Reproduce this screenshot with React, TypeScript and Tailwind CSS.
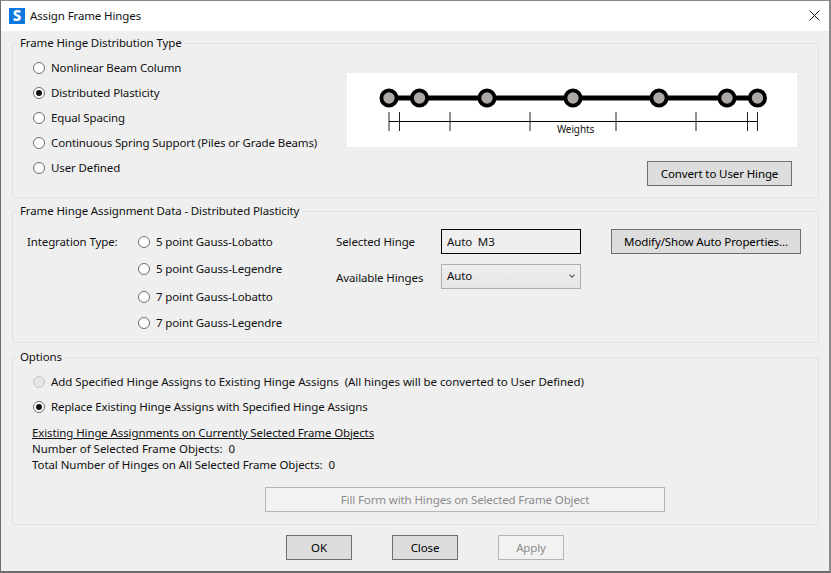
import React from "react";

function Radio({ label, checked, disabled, wide }: { label: string; checked?: boolean; disabled?: boolean; wide?: boolean }) {
  return (
    <div className="flex h-[25px] items-center gap-[6px]">
      <span
        className={`flex h-[12px] w-[12px] shrink-0 items-center justify-center rounded-full border ${
          disabled ? "border-[#c4c4c4] bg-[#e6e6e6]" : "border-[#6e6e6e] bg-white"
        }`}
      >
        {checked && <span className="h-[6px] w-[6px] rounded-full bg-[#111111]" />}
      </span>
      <span className={`whitespace-pre ${wide ? "tracking-[-0.06px]" : ""}`}>{label}</span>
    </div>
  );
}

function Btn({ children, className, disabled }: { children: React.ReactNode; className: string; disabled?: boolean }) {
  return (
    <button
      className={`flex h-[25px] items-center justify-center border ${
        disabled ? "border-[#b5b5b5] bg-[#f2f2f2] text-[#8c8c8c]" : "border-[#6f6f6f] bg-[#dddddd] text-black"
      } ${className}`}
    >
      {children}
    </button>
  );
}

function Group({ title, className, children }: { title: string; className: string; children: React.ReactNode }) {
  return (
    <fieldset className={`ml-[11px] w-[807px] shrink-0 rounded-[3px] border border-[#dbe2e9] ${className}`}>
      <legend className="ml-[4px] h-4 px-[3px] leading-4">{title}</legend>
      {children}
    </fieldset>
  );
}

function HingeDiagram() {
  const nodes = [389, 419.5, 487, 573, 659, 727, 757.5];
  const ticks = [389, 399.5, 450, 530, 616, 696, 747.5, 757.5];
  return (
    <svg width="450" height="74" viewBox="347 73 450 74" className="block bg-white">
      <line x1="389" y1="98" x2="757" y2="98" stroke="#000" strokeWidth="5" />
      {nodes.map((x) => (
        <circle key={x} cx={x} cy="98" r="7.6" fill="#aca8a6" stroke="#000" strokeWidth="3.8" />
      ))}
      <line x1="389" y1="121.5" x2="757" y2="121.5" stroke="#000" strokeWidth="1" />
      {ticks.map((x) => (
        <line key={x} x1={x} y1="112" x2={x} y2="131" stroke="#222" strokeWidth="1" />
      ))}
      <text x="575.5" y="133" textAnchor="middle" fontSize="10" fill="#111">Weights</text>
    </svg>
  );
}

export default function App() {
  return (
    <div
      className="flex h-[573px] w-[831px] flex-col border-t border-r-2 border-b-2 border-l border-t-[#8a8a8a] border-r-[#8a8a8a] border-b-[#6d6d6d] border-l-[#6d6d6d] bg-[#efefef] text-[11.5px] leading-4 tracking-[-0.12px] text-[#111111]"
      style={{ fontFamily: '"Noto Sans", "Open Sans", sans-serif' }}
    >
      <header className="flex h-[30px] shrink-0 items-center justify-between bg-white pr-[9px] pb-[1px] pl-2">
        <div className="flex items-center gap-[5px]">
          <span className="flex h-4 w-4 items-center justify-center bg-[#0b78de] text-[15px] leading-none font-extrabold text-white">S</span>
          <span>Assign Frame Hinges</span>
        </div>
        <svg width="11" height="11" viewBox="0 0 11 11">
          <path d="M0.5 0.5L10.5 10.5M10.5 0.5L0.5 10.5" stroke="#111" strokeWidth="1" fill="none" />
        </svg>
      </header>

      <Group title="Frame Hinge Distribution Type" className="mt-[4px] h-[163px]">
        <div className="flex justify-between pr-[21px] pl-[20px]">
          <div className="pt-[4px]">
            <Radio label="Nonlinear Beam Column" />
            <Radio label="Distributed Plasticity" checked />
            <Radio label="Equal Spacing" />
            <Radio label="Continuous Spring Support (Piles or Grade Beams)" />
            <Radio label="User Defined" />
          </div>
          <div className="flex flex-col items-end pt-[22px]">
            <HingeDiagram />
            <Btn className="mt-[14px] mr-[5px] w-[145px]">Convert to User Hinge</Btn>
          </div>
        </div>
      </Group>

      <Group title="Frame Hinge Assignment Data - Distributed Plasticity" className="mt-[5px] h-[140px]">
        <div className="flex items-start pt-[10px] pl-[14px]">
          <span className="w-[111px] pt-[5px]">Integration Type:</span>
          <div className="flex w-[198px] flex-col">
            <Radio label="5 point Gauss-Lobatto" />
            <div className="mt-[2px]"><Radio label="5 point Gauss-Legendre" /></div>
            <div className="mt-[3px]"><Radio label="7 point Gauss-Lobatto" /></div>
            <div className="mt-[1px]"><Radio label="7 point Gauss-Legendre" /></div>
          </div>
          <div className="grid auto-rows-[25px] grid-cols-[105px_140px] items-center gap-y-[10px]">
            <span>Selected Hinge</span>
            <div className="flex h-[25px] items-center border border-black px-[5px]"><span className="whitespace-pre">Auto  M3</span></div>
            <span className="pt-[2px]">Available Hinges</span>
            <div className="flex h-[25px] items-center justify-between border border-[#adadad] bg-gradient-to-b from-[#efefef] to-[#e5e5e5] pr-[5px] pb-[2px] pl-[5px]">
              <span>Auto</span>
              <svg width="6" height="4" viewBox="0 0 6 4"><path d="M0.5 0.7L3 3.2L5.5 0.7" stroke="#555" strokeWidth="1.1" fill="none" /></svg>
            </div>
          </div>
          <Btn className="ml-[30px] w-[190px]">Modify/Show Auto Properties...</Btn>
        </div>
      </Group>

      <Group title="Options" className="mt-[6px] h-[176px]">
        <div className="flex flex-col pt-[4px] pl-[20px]">
          <Radio wide label="Add Specified Hinge Assigns to Existing Hinge Assigns  (All hinges will be converted to User Defined)" disabled />
          <Radio label="Replace Existing Hinge Assigns with Specified Hinge Assigns" checked />
          <div className="mt-[6px] -ml-[1px] flex flex-col">
            <span className="underline">Existing Hinge Assignments on Currently Selected Frame Objects</span>
            <span className="whitespace-pre tracking-[-0.02px]">Number of Selected Frame Objects:  0</span>
            <span className="whitespace-pre tracking-[-0.07px]">Total Number of Hinges on All Selected Frame Objects:  0</span>
          </div>
          <Btn disabled className="mt-[14px] ml-[232px] w-[400px]">Fill Form with Hinges on Selected Frame Object</Btn>
        </div>
      </Group>

      <footer className="mt-[10px] flex pl-[285px]">
        <Btn className="w-[66px]">OK</Btn>
        <Btn className="ml-[40px] w-[66px]">Close</Btn>
        <Btn disabled className="ml-[40px] w-[66px]">Apply</Btn>
      </footer>
    </div>
  );
}
